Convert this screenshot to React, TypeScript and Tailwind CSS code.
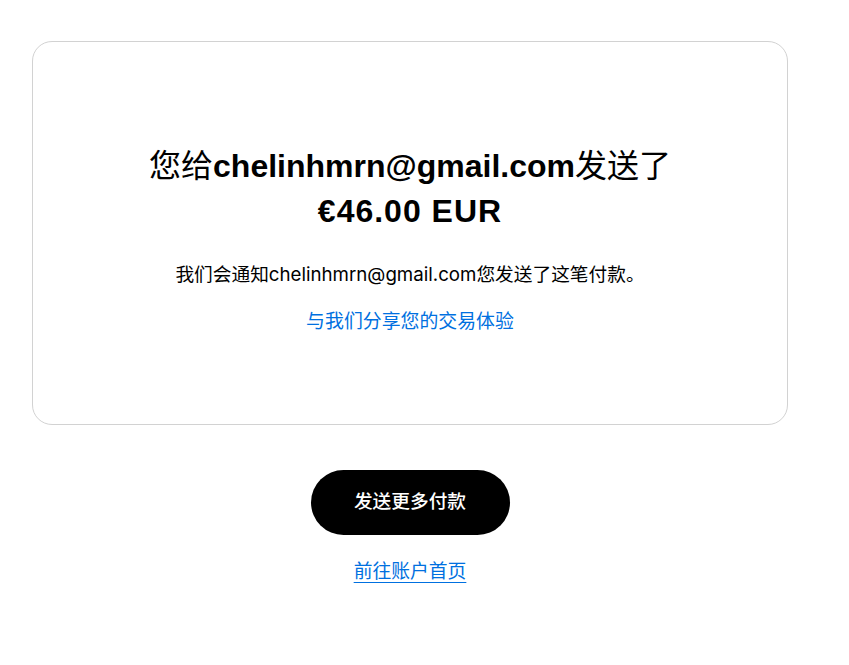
import React from "react";

const CJK = '"Noto Sans CJK SC"';

export default function App() {
	return (
		<div
			className="min-h-screen bg-white text-black"
			style={{ fontFamily: `Inter, ${CJK}, sans-serif` }}
		>
			<div className="w-[820px] px-8 pt-[41px]">
				{/* Confirmation card */}
				<div className="h-[384px] rounded-[20px] border border-[#d2d2d2] flex flex-col items-center pt-[102px]">
					<h1 className="text-center text-[32px] leading-[45px] font-['Liberation_Sans','Noto_Sans_CJK_SC',sans-serif]">
						<span className="font-normal">您给</span>
						<span className="font-bold">chelinhmrn@gmail.com</span>
						<span className="font-normal">发送了</span>
						<br />
						<span className="font-bold tracking-[1px]">€46.00 EUR</span>
					</h1>
					<p className="mt-[27px] text-[18.7px] leading-[27px]">
						我们会通知chelinhmrn@gmail.com您发送了这笔付款。
					</p>
					<a
						href="#"
						className="mt-5 text-[18.9px] leading-[27px] text-[#0070e0]"
					>
						与我们分享您的交易体验
					</a>
				</div>

				{/* Actions */}
				<div className="flex flex-col items-center mt-[45px]">
					<button
						type="button"
						className="w-[199px] h-[65px] rounded-full bg-black text-white text-[18.7px] font-medium"
					>
						发送更多付款
					</button>
					<a
						href="#"
						className="mt-[23px] text-[18.8px] leading-[27px] text-[#0070e0] underline underline-offset-4"
					>
						前往账户首页
					</a>
				</div>
			</div>
		</div>
	);
}
